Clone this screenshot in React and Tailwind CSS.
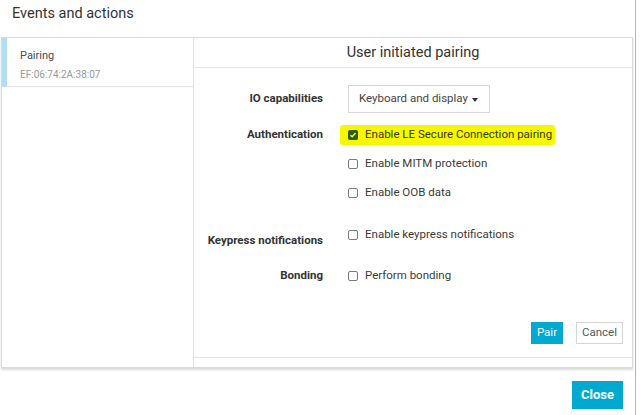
import React from "react";

const Check = ({ checked }) =>
  checked ? (
    <span className="flex h-[10px] w-[10px] items-center justify-center rounded-[2px] bg-[#2f5d0c]">
      <svg viewBox="0 0 10 10" className="h-[8px] w-[8px]">
        <path d="M1.8 5.2 L4 7.3 L8.2 2.6" fill="none" stroke="#e9f57a" strokeWidth="1.8" />
      </svg>
    </span>
  ) : (
    <span className="h-[10px] w-[10px] rounded-[2px] border border-[#7a7a7a] bg-white" />
  );

const Option = ({ label, checked }) => (
  <div className="flex h-[29px] items-center gap-[7px] text-[11.5px] text-[#3a3a3a]">
    <Check checked={checked} />
    <span>{label}</span>
  </div>
);

export default function App() {
  return (
    <div
      className="h-[415px] w-[636px] border-r border-[#b5b5b5] bg-white"
      style={{ fontFamily: "Roboto, 'Liberation Sans', sans-serif" }}
    >
      <div className="h-[37px] px-[12px] pt-[4px] text-[14.5px] leading-[20px] text-[#333]">Events and actions</div>

      <div className="ml-[1px] flex h-[331px] w-[632px] border border-[#dadada] shadow-[0_2px_2px_rgba(0,0,0,0.15)]">
        {/* device list */}
        <div className="w-[192px] border-r border-[#e4e4e4]">
          <div className="h-[49px] border-b border-l-[5px] border-b-[#e4e4e4] border-l-[#aedff4] pl-[13px]">
            <div className="pt-[10px] text-[11px] leading-[15px] text-[#4a4a4a]">Pairing</div>
            <div className="pt-[5px] text-[10px] leading-[14px] text-[#999]">EF:06:74:2A:38:07</div>
          </div>
        </div>

        {/* pairing panel */}
        <div className="flex flex-1 flex-col">
          <div className="flex h-[30px] items-center justify-center border-b border-[#e4e4e4] text-[14.5px] text-[#333]">
            User initiated pairing
          </div>

          <div className="flex-1">
            <div className="mt-[17px] flex">
              <div className="flex w-[129px] items-center justify-end text-[11.5px] font-bold text-[#333]">IO capabilities</div>
              <div className="ml-[25px] flex h-[28px] w-[142px] items-center border border-[#d6d6d6] pl-[10px] text-[11.5px] text-[#444]">
                Keyboard and display
                <span className="ml-[4px] mt-[1px] h-0 w-0 border-x-[3.5px] border-t-[4px] border-x-transparent border-t-[#333]" />
              </div>
            </div>

            <div className="mt-[7px] flex">
              <div className="flex h-[29px] w-[129px] items-center justify-end text-[11.5px] font-bold text-[#333]">Authentication</div>
              <div className="ml-[25px]">
                <div className="-ml-[8px] flex h-[29px] items-center">
                  <div className="flex h-[20px] items-center gap-[7px] rounded-[3px] bg-[#f7f700] pl-[8px] pr-[3px] text-[11.5px] text-[#3a3a00]">
                    <Check checked />
                    <span>Enable LE Secure Connection pairing</span>
                  </div>
                </div>
                <Option label="Enable MITM protection" />
                <Option label="Enable OOB data" />
              </div>
            </div>

            <div className="mt-[14px] flex">
              <div className="w-[129px] pt-[11px] text-right text-[11.5px] font-bold leading-[16px] text-[#333]">Keypress notifications</div>
              <div className="ml-[25px]">
                <div className="flex h-[28px] items-center gap-[7px] text-[11.5px] text-[#3a3a3a]">
                  <Check />
                  <span>Enable keypress notifications</span>
                </div>
              </div>
            </div>

            <div className="mt-[13px] flex">
              <div className="flex h-[28px] w-[129px] items-center justify-end text-[11.5px] font-bold text-[#333]">Bonding</div>
              <div className="ml-[25px] flex h-[28px] items-center gap-[7px] text-[11.5px] text-[#3a3a3a]">
                <Check />
                <span>Perform bonding</span>
              </div>
            </div>

            <div className="mt-[32px] flex justify-end gap-[13px] pr-[9px]">
              <button className="h-[22px] w-[32px] bg-[#00a9cf] text-[11.5px] text-white">Pair</button>
              <button className="h-[22px] w-[47px] border border-[#d6d6d6] bg-white text-[11.5px] text-[#555]">Cancel</button>
            </div>
          </div>

          <div className="h-[10px] border-t border-[#e4e4e4]" />
        </div>
      </div>

      <div className="flex justify-end pr-[12px] pt-[13px]">
        <button className="h-[28px] w-[51px] bg-[#00a9cf] text-[13px] font-bold text-white">Close</button>
      </div>
    </div>
  );
}
